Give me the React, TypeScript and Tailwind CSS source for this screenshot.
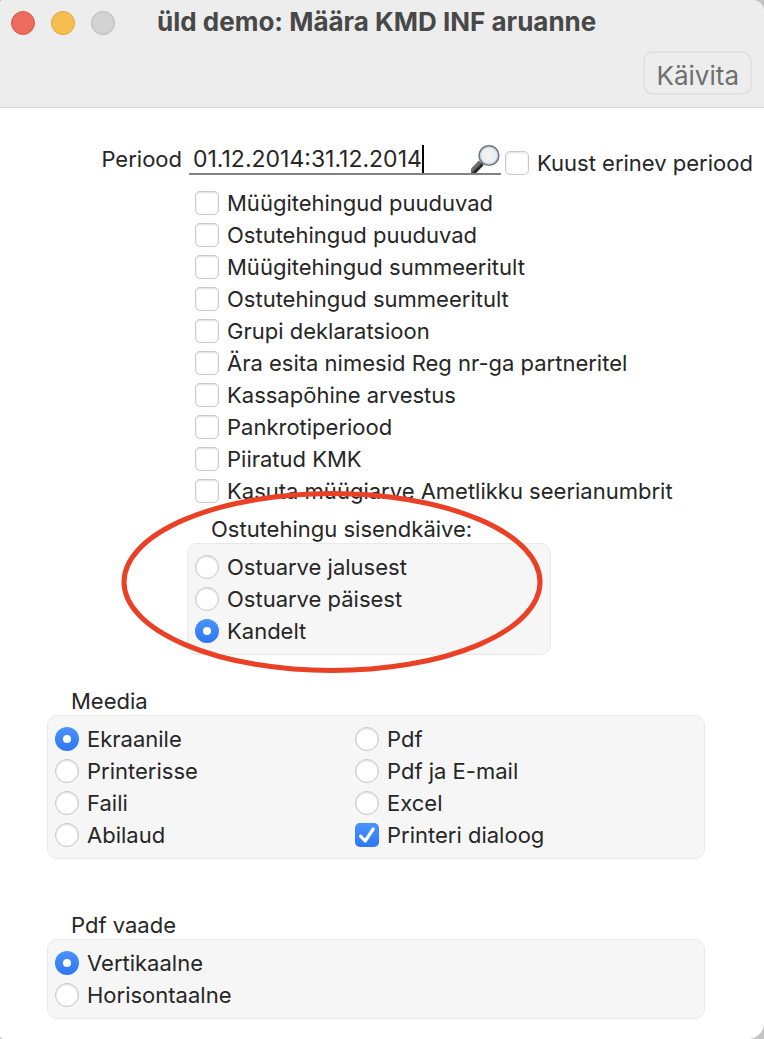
import { useId, useState } from 'react';
import type { ReactNode } from 'react';

// ─── Data ─────────────────────────────────────────────────────────────────────

const REPORT_OPTIONS = [
  'Müügitehingud puuduvad',
  'Ostutehingud puuduvad',
  'Müügitehingud summeeritult',
  'Ostutehingud summeeritult',
  'Grupi deklaratsioon',
  'Ära esita nimesid Reg nr-ga partneritel',
  'Kassapõhine arvestus',
  'Pankrotiperiood',
  'Piiratud KMK',
  'Kasuta müügiarve Ametlikku seerianumbrit',
];

const INPUT_VAT_SOURCES = ['Ostuarve jalusest', 'Ostuarve päisest', 'Kandelt'];
const MEDIA_LEFT = ['Ekraanile', 'Printerisse', 'Faili', 'Abilaud'];
const MEDIA_RIGHT = ['Pdf', 'Pdf ja E-mail', 'Excel'];
const PDF_VIEWS = ['Vertikaalne', 'Horisontaalne'];

// ─── Controls ─────────────────────────────────────────────────────────────────

function Checkbox({ label, defaultChecked = false }: { label: string; defaultChecked?: boolean }) {
  const id = useId();
  return (
    <div className="flex h-8 items-center gap-2">
      <span className="relative flex shrink-0">
        <input
          id={id}
          type="checkbox"
          defaultChecked={defaultChecked}
          className="peer size-6 appearance-none rounded-[5px] border border-[#c9c9c9] bg-white shadow-[inset_0_1px_2px_rgba(0,0,0,0.12)] checked:border-transparent checked:bg-linear-to-b checked:from-[#4a93fb] checked:to-[#2f76f6] checked:bg-origin-border checked:shadow-none"
        />
        <svg
          viewBox="0 0 24 24"
          aria-hidden="true"
          className="pointer-events-none absolute inset-0 hidden size-6 peer-checked:block"
        >
          <path
            d="M5.6 13.2 10.2 18 18.2 6"
            fill="none"
            stroke="#fff"
            strokeWidth="3.2"
            strokeLinecap="round"
            strokeLinejoin="round"
          />
        </svg>
      </span>
      <label htmlFor={id} className="whitespace-nowrap">
        {label}
      </label>
    </div>
  );
}

type RadioProps = {
  name: string;
  label: string;
  value: string;
  onChange: (value: string) => void;
};

function Radio({ name, label, value, onChange }: RadioProps) {
  const id = useId();
  return (
    <div className="flex h-8 items-center gap-2">
      <input
        id={id}
        type="radio"
        name={name}
        checked={value === label}
        onChange={() => onChange(label)}
        className="flex size-6 shrink-0 appearance-none items-center justify-center rounded-full border border-[#c6c6c6] bg-white shadow-[inset_0_1px_2px_rgba(0,0,0,0.14)] checked:border-transparent checked:bg-linear-to-b checked:from-[#4a93fb] checked:to-[#2f76f6] checked:bg-origin-border checked:shadow-none checked:before:size-2 checked:before:rounded-full checked:before:bg-white checked:before:content-['']"
      />
      <label htmlFor={id} className="whitespace-nowrap">
        {label}
      </label>
    </div>
  );
}

function Group({ title, children }: { title: string; children: ReactNode }) {
  return (
    <fieldset className="min-w-0">
      <legend className="h-7 pl-6 leading-7">{title}</legend>
      <div className="rounded-[10px] border border-[#e9e9e9] bg-[#f6f6f6] px-[7px] py-[7px]">
        {children}
      </div>
    </fieldset>
  );
}

function Magnifier() {
  return (
    <svg viewBox="0 0 30 30" aria-hidden="true" className="size-[30px]">
      <defs>
        <linearGradient id="handle" x1="0" y1="0" x2="1" y2="1">
          <stop offset="0" stopColor="#111" />
          <stop offset="0.45" stopColor="#777" />
          <stop offset="0.6" stopColor="#222" />
          <stop offset="1" stopColor="#000" />
        </linearGradient>
        <radialGradient id="lens">
          <stop offset="0" stopColor="#f4f4f4" />
          <stop offset="1" stopColor="#e8eaee" />
        </radialGradient>
      </defs>
      <path d="M12.500 18 9 21.500" stroke="#777" strokeWidth="2.500" />
      <path d="M8 17.600 12.600 22.200 5 30H0V25.800Z" fill="url(#handle)" />
      <circle cx="18" cy="12.500" r="9.800" fill="url(#lens)" stroke="#6d7583" strokeWidth="1.600" />
      <circle cx="18" cy="12.500" r="8.500" fill="none" stroke="#c3cad6" strokeWidth="1" />
    </svg>
  );
}

// ─── Window ───────────────────────────────────────────────────────────────────

export default function App() {
  const [period, setPeriod] = useState('01.12.2014:31.12.2014');
  const [source, setSource] = useState('Kandelt');
  const [media, setMedia] = useState('Ekraanile');
  const [pdfView, setPdfView] = useState('Vertikaalne');

  return (
    <div className="min-h-screen bg-[#c4c4c4]">
      <main className="min-h-screen overflow-hidden rounded-tl rounded-tr-xl rounded-br-2xl rounded-bl bg-white pb-5 font-['Inter','Liberation_Sans',sans-serif] text-[22px] leading-8 text-[#262626]">
        <header className="border-b border-[#d6d6d6] bg-[#ededed] pr-3 pb-3 pl-[11px]">
          <div className="flex h-[46px] items-center">
            <div className="flex gap-4">
              <button
                type="button"
                aria-label="Sulge"
                className="size-6 rounded-full border border-[#d8574c] bg-[#ed6a5e]"
              />
              <button
                type="button"
                aria-label="Minimeeri"
                className="size-6 rounded-full border border-[#dba33a] bg-[#f5bf4f]"
              />
              <button
                type="button"
                aria-label="Suurenda"
                disabled
                className="size-6 rounded-full border border-[#b9b9b9] bg-[#d3d3d3]"
              />
            </div>
            <h1 className="pb-0.5 pl-[42px] text-[26px] leading-8 font-bold text-[#484848]">
              üld demo: Määra KMD INF aruanne
            </h1>
          </div>
          <div className="flex justify-end pt-[5px]">
            <button
              type="button"
              className="h-11 rounded-[10px] border-2 border-[#e1e1e1] px-[11px] pt-1.5 text-[26px] leading-8 text-[#6f6f6f]"
            >
              Käivita
            </button>
          </div>
        </header>

        <div className="flex items-end pt-[35px]">
          <label htmlFor="period" className="w-[182px] shrink-0 pb-1.5 text-right leading-7">
            Periood
          </label>
          <div className="mb-1 ml-[7px] flex w-[312px] shrink-0 items-end border-b-2 border-[#828282] pl-1">
            <input
              id="period"
              type="text"
              value={period}
              onChange={(e) => setPeriod(e.target.value)}
              className="field-sizing-content h-7 text-[23px] leading-7 caret-transparent outline-none"
            />
            <span aria-hidden="true" className="h-7 w-[2px] bg-black" />
            <button type="button" aria-label="Otsi" className="ml-auto">
              <Magnifier />
            </button>
          </div>
          <div className="ml-1">
            <Checkbox label="Kuust erinev periood" />
          </div>
        </div>

        <div className="pt-2 pl-[195px]">
          {REPORT_OPTIONS.map((option) => (
            <Checkbox key={option} label={option} />
          ))}
        </div>

        <div className="relative ml-[187px] w-[364px] pt-2">
          <Group title="Ostutehingu sisendkäive:">
            {INPUT_VAT_SOURCES.map((label) => (
              <Radio key={label} name="source" label={label} value={source} onChange={setSource} />
            ))}
          </Group>
          {/* Hand-drawn style highlight around the group */}
          <svg
            viewBox="0 0 422 184"
            aria-hidden="true"
            className="pointer-events-none absolute -top-[17px] -left-[66px] h-[184px] w-[422px] max-w-none"
          >
            <ellipse cx="211" cy="92" rx="208" ry="88.500" fill="none" stroke="#ea4025" strokeWidth="5" />
          </svg>
        </div>

        <div className="flex flex-col gap-[52px] pt-8 pr-[59px] pl-[47px]">
          <Group title="Meedia">
            <div className="grid grid-cols-[300px_1fr]">
              <div>
                {MEDIA_LEFT.map((label) => (
                  <Radio key={label} name="media" label={label} value={media} onChange={setMedia} />
                ))}
              </div>
              <div>
                {MEDIA_RIGHT.map((label) => (
                  <Radio key={label} name="media" label={label} value={media} onChange={setMedia} />
                ))}
                <Checkbox label="Printeri dialoog" defaultChecked />
              </div>
            </div>
          </Group>

          <Group title="Pdf vaade">
            {PDF_VIEWS.map((label) => (
              <Radio key={label} name="pdfView" label={label} value={pdfView} onChange={setPdfView} />
            ))}
          </Group>
        </div>
      </main>
    </div>
  );
}
